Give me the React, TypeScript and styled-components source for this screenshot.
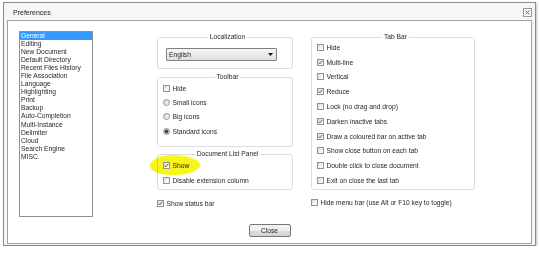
import React from "react";
import styled, { createGlobalStyle } from "styled-components";

const GlobalStyle = createGlobalStyle`
  html, body {
    margin: 0;
    padding: 0;
    background: #ffffff;
  }
  body {
    font-family: "Liberation Sans", Arial, sans-serif;
    font-size: 6.7px;
    color: #262626;
  }
`;

const Window = styled.div`
  position: relative;
  margin: 2px 0 0 3px;
  width: 533px;
  height: 244px;
  box-sizing: border-box;
  border: 1px solid #8c8c8c;
  background: #f6f6f6;
  padding: 0 3px 1px 3px;
  display: flex;
  flex-direction: column;
  box-shadow: 1px 1px 2px rgba(0, 0, 0, 0.25);
`;

const TitleBar = styled.div`
  height: 17px;
  display: flex;
  align-items: center;
  justify-content: space-between;
  padding: 2px 0 0 6px;
  box-sizing: border-box;
`;

const Title = styled.span`
  font-size: 7px;
  color: #222;
`;

const CloseBox = styled.div`
  width: 9px;
  height: 9px;
  box-sizing: border-box;
  border: 1px solid #9a9a9a;
  background: #f8f8f8;
  display: flex;
  align-items: center;
  justify-content: center;
`;

const Client = styled.div`
  flex: 1;
  border: 1px solid #a2a2a2;
  background: #ffffff;
  display: flex;
  flex-direction: column;
  padding-top: 10px;
`;

const Main = styled.div`
  display: flex;
  align-items: flex-start;
  padding-left: 11px;
  height: 186px;
`;

const ListBox = styled.ul`
  list-style: none;
  margin: 0;
  padding: 0;
  width: 74px;
  height: 186px;
  box-sizing: border-box;
  border: 1px solid #8d9096;
  background: #fff;
`;

const ListItem = styled.li<{ $selected?: boolean }>`
  line-height: 8.06px;
  height: 8.06px;
  padding-left: 1px;
  white-space: nowrap;
  background: ${(p) => (p.$selected ? "#3399ff" : "transparent")};
  color: ${(p) => (p.$selected ? "#ffffff" : "#262626")};
`;

const Panels = styled.div`
  display: flex;
  gap: 18px;
  margin: 3px 0 0 64px;
`;

const Column = styled.div<{ $width: number }>`
  width: ${(p) => p.$width}px;
  display: flex;
  flex-direction: column;
`;

const Group = styled.fieldset<{ $mt?: number; $pt?: number; $pb?: number; $pl?: number }>`
  position: relative;
  margin: ${(p) => p.$mt ?? 0}px 0 0 0;
  padding: ${(p) => p.$pt ?? 0}px 0 ${(p) => p.$pb ?? 0}px ${(p) => p.$pl ?? 5}px;
  border: 1px solid #dadde0;
  border-radius: 3px;
  min-width: 0;
`;

const Legend = styled.legend`
  margin: 0 auto;
  padding: 0 2px;
  line-height: 6px;
  font-size: 6.7px;
  color: #262626;
`;

const Row = styled.div<{ $h: number }>`
  position: relative;
  display: flex;
  align-items: center;
  gap: 2.5px;
  height: ${(p) => p.$h}px;
  white-space: nowrap;
`;

const Box = styled.span`
  position: relative;
  flex: none;
  width: 7px;
  height: 7px;
  box-sizing: border-box;
  border: 1px solid #929292;
  background: linear-gradient(135deg, #dcdcdc 0%, #f4f4f4 60%, #ffffff 100%);
  display: flex;
  align-items: center;
  justify-content: center;
`;

const Radio = styled.span<{ $on?: boolean }>`
  flex: none;
  width: 7px;
  height: 7px;
  box-sizing: border-box;
  border-radius: 50%;
  border: 1px solid #939393;
  background: ${(p) =>
    p.$on
      ? "radial-gradient(circle, #23405f 0 1.3px, #8aa3c0 1.8px, #e6e6e6 2.6px)"
      : "linear-gradient(135deg, #d4d4d4, #f8f8f8)"};
`;

const Select = styled.div`
  margin-left: 3px;
  width: 111px;
  height: 13px;
  box-sizing: border-box;
  border: 1px solid #7f7f7f;
  border-radius: 1px;
  background: linear-gradient(#f5f5f5, #e0e0e0);
  display: flex;
  align-items: center;
  justify-content: space-between;
  padding: 0 3px 0 2px;
`;

const Footer = styled.div`
  display: flex;
  justify-content: center;
  margin-top: 7px;
`;

const Button = styled.button`
  width: 42px;
  height: 13px;
  padding: 0;
  font-family: inherit;
  font-size: 6.7px;
  color: #262626;
  border: 1px solid #777;
  border-radius: 2px;
  background: linear-gradient(#f4f4f4 0%, #ececec 50%, #dfdfdf 51%, #d2d2d2 100%);
`;

const Marker = styled.span`
  position: absolute;
  left: -13px;
  top: -3px;
  width: 50px;
  height: 20px;
  border-radius: 45% 55% 50% 40% / 55% 50% 50% 45%;
  background: #f8f500;
  opacity: 0.9;
  mix-blend-mode: multiply;
  filter: blur(0.6px);
  pointer-events: none;
`;

const Check = () => (
  <svg width="5" height="5" viewBox="0 0 5 5">
    <path d="M0.7 2.6 L1.9 3.9 L4.3 0.8" fill="none" stroke="#333" strokeWidth="0.8" />
  </svg>
);

const CheckBox = ({ on }: { on?: boolean }) => <Box>{on && <Check />}</Box>;

const categories = [
  "General",
  "Editing",
  "New Document",
  "Default Directory",
  "Recent Files History",
  "File Association",
  "Language",
  "Highlighting",
  "Print",
  "Backup",
  "Auto-Completion",
  "Multi-Instance",
  "Delimiter",
  "Cloud",
  "Search Engine",
  "MISC.",
];

const tabBar: [string, boolean][] = [
  ["Hide", false],
  ["Multi-line", true],
  ["Vertical", false],
  ["Reduce", true],
  ["Lock (no drag and drop)", false],
  ["Darken inactive tabs", true],
  ["Draw a coloured bar on active tab", true],
  ["Show close button on each tab", false],
  ["Double click to close document", false],
  ["Exit on close the last tab", false],
];

export default function App() {
  return (
    <>
      <GlobalStyle />
      <Window>
        <TitleBar>
          <Title>Preferences</Title>
          <CloseBox>
            <svg width="5" height="5" viewBox="0 0 5 5">
              <path d="M0.7 0.7 L4.3 4.3 M4.3 0.7 L0.7 4.3" stroke="#666" strokeWidth="1" />
            </svg>
          </CloseBox>
        </TitleBar>
        <Client>
          <Main>
            <ListBox>
              {categories.map((c, i) => (
                <ListItem key={c} $selected={i === 0}>
                  {c}
                </ListItem>
              ))}
            </ListBox>
            <Panels>
              <Column $width={136}>
                <Group $pt={8} $pb={7}>
                  <Legend>Localization</Legend>
                  <Select>
                    <span>English</span>
                    <svg width="5" height="3" viewBox="0 0 5 3">
                      <path d="M0 0 H5 L2.5 3 Z" fill="#111" />
                    </svg>
                  </Select>
                </Group>
                <Group $mt={5} $pt={1} $pb={8}>
                  <Legend>Toolbar</Legend>
                  <Row $h={14.3}>
                    <CheckBox />
                    Hide
                  </Row>
                  <Row $h={14.3}>
                    <Radio />
                    Small icons
                  </Row>
                  <Row $h={14.3}>
                    <Radio />
                    Big icons
                  </Row>
                  <Row $h={14.3}>
                    <Radio $on />
                    Standard icons
                  </Row>
                </Group>
                <Group $mt={4} $pt={0.5} $pb={1.5}>
                  <Legend>Document List Panel</Legend>
                  <Row $h={15}>
                    <Marker />
                    <CheckBox on />
                    Show
                  </Row>
                  <Row $h={15}>
                    <CheckBox />
                    Disable extension column
                  </Row>
                </Group>
                <Row $h={14} style={{ marginTop: 6 }}>
                  <CheckBox on />
                  Show status bar
                </Row>
              </Column>
              <Column $width={164}>
                <Group $pt={0} $pb={1}>
                  <Legend>Tab Bar</Legend>
                  {tabBar.map(([label, on]) => (
                    <Row key={label} $h={14.8}>
                      <CheckBox on={on} />
                      {label}
                    </Row>
                  ))}
                </Group>
                <Row $h={14} style={{ marginTop: 6 }}>
                  <CheckBox />
                  Hide menu bar (use Alt or F10 key to toggle)
                </Row>
              </Column>
            </Panels>
          </Main>
          <Footer>
            <Button>Close</Button>
          </Footer>
        </Client>
      </Window>
    </>
  );
}
